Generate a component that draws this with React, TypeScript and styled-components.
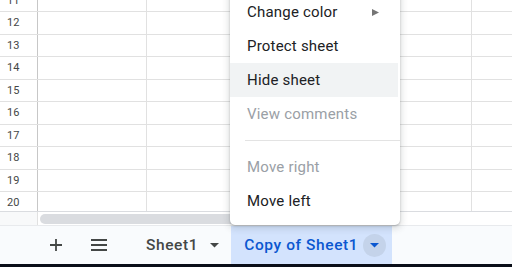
import React from "react";
import styled, { createGlobalStyle } from "styled-components";

const Global = createGlobalStyle`
  html, body { margin: 0; padding: 0; background: #ffffff; overflow: hidden; }
  body { font-family: Roboto, "Liberation Sans", Arial, sans-serif; }
  * { box-sizing: border-box; }
`;

const Page = styled.div`
  position: relative;
  width: 512px;
  height: 267px;
  overflow: hidden;
  display: flex;
  flex-direction: column;
  background: #ffffff;
`;

const Viewport = styled.div`
  height: 211px;
  overflow: hidden;
  flex: none;
`;

const Rows = styled.div`
  margin-top: -10.5px;
  display: flex;
  flex-direction: column;
`;

const Row = styled.div`
  display: flex;
  height: 22.5px;
  border-bottom: 1px solid #e1e1e1;
`;

const RowHeader = styled.div`
  width: 38px;
  flex: none;
  display: flex;
  align-items: center;
  padding-left: 7px;
  font-size: 11px;
  color: #444746;
  border-right: 1px solid #c7c7c7;
`;

const Cell = styled.div`
  width: 108.5px;
  flex: none;
  border-right: 1px solid #e1e1e1;
`;

const ScrollRow = styled.div`
  height: 14px;
  flex: none;
  display: flex;
  align-items: center;
  border-top: 1px solid #dadce0;
  background: #ffffff;
`;

const ScrollCorner = styled.div`
  width: 38px;
  height: 100%;
  flex: none;
  background: #f8f9fa;
  border-right: 1px solid #e1e1e1;
`;

const Thumb = styled.div`
  margin-left: 2px;
  width: 260px;
  height: 10px;
  border-radius: 5px;
  background: #dadce0;
`;

const BottomBar = styled.div`
  height: 39px;
  flex: none;
  display: flex;
  align-items: stretch;
  padding-left: 36px;
  background: #f9fbfd;
  border-top: 1px solid #e8eaed;
`;

const IconButton = styled.div<{ $gap?: number }>`
  width: 40px;
  display: flex;
  align-items: center;
  justify-content: center;
  margin-right: ${(p) => p.$gap ?? 0}px;
  color: #444746;
`;

const Tab = styled.div<{ $active?: boolean }>`
  display: flex;
  align-items: center;
  padding: ${(p) => (p.$active ? "0 6px 0 13px" : "0 5px 0 13px")};
  background: ${(p) => (p.$active ? "#d3e3fd" : "transparent")};
  color: ${(p) => (p.$active ? "#0b57d0" : "#444746")};
  font-size: 15.5px;
  font-weight: 500;
  letter-spacing: 0.6px;
  gap: 5px;
`;

const TabArrow = styled.div<{ $active?: boolean }>`
  width: 23px;
  height: 23px;
  border-radius: 50%;
  display: flex;
  align-items: center;
  justify-content: center;
  background: ${(p) => (p.$active ? "#c4d3ea" : "transparent")};
`;

const DarkStrip = styled.div`
  flex: 1;
  background: #0a0e18;
`;

const Menu = styled.div`
  position: absolute;
  left: 230px;
  top: -13px;
  width: 170px;
  padding: 8px 0 7px;
  background: #ffffff;
  border-radius: 0 0 5px 5px;
  box-shadow: 0 2px 6px 2px rgba(60, 64, 67, 0.15), 0 1px 2px rgba(60, 64, 67, 0.3);
`;

const Item = styled.div<{ $disabled?: boolean; $hover?: boolean }>`
  height: 34px;
  display: flex;
  align-items: center;
  justify-content: space-between;
  padding: 0 19px 0 17px;
  margin-right: 2px;
  font-size: 15px;
  letter-spacing: 0.2px;
  color: ${(p) => (p.$disabled ? "#9aa0a6" : "#202124")};
  background: ${(p) => (p.$hover ? "#f1f3f4" : "transparent")};
`;

const Separator = styled.div`
  height: 1px;
  margin: 9px 0 9px 15px;
  background: #e3e3e3;
`;

const Caret = ({ color }: { color: string }) => (
  <svg width="9" height="5" viewBox="0 0 9 5">
    <path d="M0 0 L9 0 L4.5 4.5 Z" fill={color} />
  </svg>
);

const rows = [11, 12, 13, 14, 15, 16, 17, 18, 19, 20];

export default function App() {
  return (
    <>
      <Global />
      <Page>
        <Viewport>
          <Rows>
            {rows.map((n) => (
              <Row key={n}>
                <RowHeader>{n}</RowHeader>
                <Cell />
                <Cell />
                <Cell />
                <Cell />
                <Cell />
              </Row>
            ))}
          </Rows>
        </Viewport>
        <ScrollRow>
          <ScrollCorner />
          <Thumb />
        </ScrollRow>
        <BottomBar>
          <IconButton $gap={3}>
            <svg width="12" height="12" viewBox="0 0 12 12">
              <path d="M6 0 V12 M0 6 H12" stroke="#444746" strokeWidth="1.8" />
            </svg>
          </IconButton>
          <IconButton $gap={14}>
            <svg width="16" height="12" viewBox="0 0 16 12">
              <path d="M0 1 H16 M0 6 H16 M0 11 H16" stroke="#444746" strokeWidth="1.8" />
            </svg>
          </IconButton>
          <Tab>
            Sheet1
            <TabArrow>
              <Caret color="#444746" />
            </TabArrow>
          </Tab>
          <Tab $active>
            Copy of Sheet1
            <TabArrow $active>
              <Caret color="#0b57d0" />
            </TabArrow>
          </Tab>
        </BottomBar>
        <DarkStrip />
        <Menu>
          <Item>
            Change color
            <svg width="7" height="7" viewBox="0 0 7 7">
              <path d="M0 0 L7 3.5 L0 7 Z" fill="#757575" />
            </svg>
          </Item>
          <Item>Protect sheet</Item>
          <Item $hover>Hide sheet</Item>
          <Item $disabled>View comments</Item>
          <Separator />
          <Item $disabled>Move right</Item>
          <Item>Move left</Item>
        </Menu>
      </Page>
    </>
  );
}
